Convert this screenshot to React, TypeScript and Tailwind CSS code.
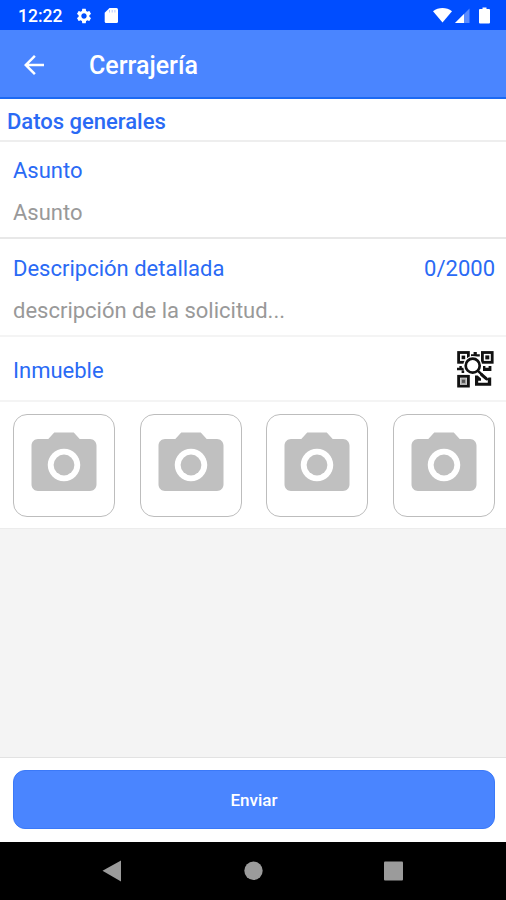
import { MdArrowBack, MdPhotoCamera, MdSettings } from "react-icons/md";

const photos = [1, 2, 3, 4];

const QrSearchIcon = () => (
  <svg width="37" height="37" viewBox="0 0 37 37" fill="none" aria-hidden="true">
    {/* finder squares */}
    <g stroke="#111" strokeWidth="2.8">
      <rect x="1.6" y="1.5" width="9.800" height="9.800" />
      <rect x="25.400" y="1.5" width="9.800" height="9.800" />
      <rect x="1.6" y="25.300" width="9.800" height="9.800" />
    </g>
    <rect x="4.6" y="4.6" width="3.6" height="3.6" fill="#111" />
    <rect x="28.3" y="4.4" width="4" height="4" fill="#111" />
    <rect x="3.4" y="27.200" width="6.2" height="6.2" fill="#aaa" />
    <rect x="4.900" y="28.700" width="3.2" height="3.2" fill="#555" />

    {/* data modules */}
    <path d="M14 5.500V3.200h2.600V1h3.200v2.200h3V5.500z" fill="#111" />
    <path d="M26 15h2.400v1.800h3.200V15h2.800v4.900H26z" fill="#111" />
    <path d="M0 19.200v-2.400h2.400v-1.800h2.400v1.800h2v2.400zM4.600 19.500h2.600v2.600H4.600z" fill="#111" />
    <path
      d="M18 24.500h2.600l3.400 3v2.300h-2.800v2h9.600v-2.600h-2l2.800-2.800h2.600v8.300H18z"
      fill="#111"
    />

    {/* magnifier */}
    <circle cx="15.700" cy="14.700" r="9.600" fill="#fff" />
    <path d="m20.800 20 8.400 7.400" stroke="#fff" strokeWidth="5.200" />
    <circle cx="15.700" cy="14.700" r="7" stroke="#111" strokeWidth="2.700" />
    <path d="m20.500 19.500 5 4.600" stroke="#111" strokeWidth="2.400" />
    <path d="m24.600 23.600 4.600 4" stroke="#111" strokeWidth="3.200" strokeLinecap="round" />
  </svg>
);

const StatusBar = () => (
  <div className="flex h-[30px] shrink-0 items-center bg-[#004dff] pl-[18px] pr-[14px] pt-[2px] text-white">
    <span className="w-[57px] pt-[2px] text-[17.5px] font-medium leading-none">12:22</span>
    <MdSettings className="h-[18px] w-[18px]" />
    <svg className="ml-[11px]" width="15" height="18" viewBox="0 0 15 18" fill="#fff" aria-hidden="true">
      <path d="M5.500 1H12.500q1.500 0 1.500 1.500v12q0 1.500-1.500 1.500H2.200q-1.500 0-1.500-1.500V5.800z" />
      <path d="M5.500 3v2.500M8.200 3v2.500M10.900 3v2.500" stroke="#004dff" strokeOpacity=".3" />
    </svg>
    <svg className="ml-auto" width="60" height="18" viewBox="0 0 60 18" fill="#fff" aria-hidden="true">
      <path d="M1 4.200C6.500 0 14.500 0 20 4.200L10.500 15.500z" />
      <path d="M37.500 1.500v14.500H23z" fillOpacity=".35" />
      <path d="M32 7V16H23z" />
      <path d="M50.500 0.500h4v1.600h2.500q1 0 1 1V15.500q0 1-1 1h-9q-1 0-1-1V3.100q0-1 1-1h2.500z" />
    </svg>
  </div>
);

const App = () => {
  return (
    <div className="flex h-[900px] w-[506px] flex-col overflow-hidden bg-[#f4f4f4] font-[Roboto,sans-serif] text-[22px] leading-[26px] text-[#2a6af5]">
      <StatusBar />

      <header className="flex h-[69px] shrink-0 items-center border-b-2 border-[#1c69f2] bg-[#4a85ff] pl-[19px] pt-[2px] text-white">
        <MdArrowBack className="h-[30px] w-[30px]" />
        <h1 className="ml-[40px] pt-[2px] text-[25px] font-medium">Cerrajería</h1>
      </header>

      <main className="flex flex-1 flex-col">
        <h2 className="flex h-[43px] items-center border-b-2 border-[#eeeeee] bg-white pl-[7px] pt-[4px] font-medium">
          Datos generales
        </h2>

        <section className="h-[97px] border-b-2 border-[#e8e8e8] bg-white px-[13px] pt-[16px]">
          <p>Asunto</p>
          <p className="mt-[16px] text-[#999]">Asunto</p>
        </section>

        <section className="h-[98px] border-b-2 border-[#f4f4f4] bg-white pl-[13px] pr-[11px] pt-[17px]">
          <div className="flex justify-between">
            <p>Descripción detallada</p>
            <p>0/2000</p>
          </div>
          <p className="mt-[16px] text-[#999]">descripción de la solicitud...</p>
        </section>

        <section className="flex h-[65px] items-center justify-between border-b-2 border-[#f4f4f4] bg-white pl-[13px] pr-[12px] pt-[2px]">
          <p className="pt-[2px]">Inmueble</p>
          <QrSearchIcon />
        </section>

        <section className="flex h-[127px] justify-between border-b border-[#ececec] bg-white pl-[13px] pr-[11px] pt-[12px]">
          {photos.map((id) => (
            <button
              key={id}
              className="flex h-[103px] w-[102px] items-center justify-center rounded-[14px] border border-[#bdbdbd] pb-px"
            >
              <MdPhotoCamera className="h-[78px] w-[78px] shrink-0 text-[#c0c0c0]" />
            </button>
          ))}
        </section>
      </main>

      <footer className="h-[85px] shrink-0 border-t border-[#e2e2e2] bg-white pl-[13px] pr-[11px] pt-[12px]">
        <button className="h-[59px] w-full rounded-[12px] border border-[#3b79f8] bg-[#4a85ff] text-[17px] font-medium text-white">
          Enviar
        </button>
      </footer>

      <nav className="flex h-[58px] shrink-0 bg-black">
        <svg width="506" height="58" viewBox="0 0 506 58" fill="#9b9b9b" aria-hidden="true">
          <path d="M102.500 28.700 121 18.500v21z" />
          <circle cx="253.500" cy="28.800" r="9.200" />
          <rect x="384" y="19.500" width="19" height="19" rx="1" />
        </svg>
      </nav>
    </div>
  );
};

export default App;
